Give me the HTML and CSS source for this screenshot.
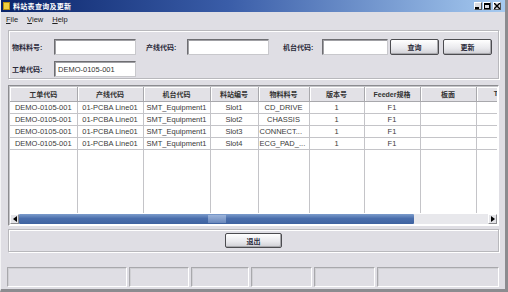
FILE: index.html
```html
<!DOCTYPE html>
<html lang="zh-CN">
<head>
    <meta charset="UTF-8">
    <title>料站表查询及更新</title>
    <link rel="stylesheet" href="styles.css">
</head>
<body>
    <div class="window">
        <div class="titlebar">
            <span class="app-icon"></span>
            <span class="title">料站表查询及更新</span>
            <div class="caption-btns">
                <span class="cbtn"><svg width="6" height="6" viewBox="0 0 6 6"><rect x="0" y="4" width="4" height="2" fill="#000"/></svg></span>
                <span class="cbtn"><svg width="6" height="6" viewBox="0 0 6 6"><rect x="0.5" y="0.5" width="5" height="5" fill="none" stroke="#000"/><rect x="0" y="0" width="6" height="2" fill="#000"/></svg></span>
                <span class="cbtn close"><svg width="6" height="6" viewBox="0 0 6 6"><path d="M0 0L6 6M6 0L0 6" stroke="#000" stroke-width="1.4"/></svg></span>
            </div>
        </div>
        <div class="menubar">
            <span><u>F</u>ile</span>
            <span><u>V</u>iew</span>
            <span><u>H</u>elp</span>
        </div>

        <div class="content">
            <div class="filters">
                <div class="filter-row">
                    <label class="lbl w42">物料料号:</label>
                    <input class="txt w82" type="text">
                    <label class="lbl w41 ml10">产线代码:</label>
                    <input class="txt w82" type="text">
                    <label class="lbl w39 ml14">机台代码:</label>
                    <input class="txt w66" type="text">
                    <button class="btn ml2">查询</button>
                    <button class="btn ml4">更新</button>
                </div>
                <div class="filter-row">
                    <label class="lbl w42">工单代码:</label>
                    <input class="txt w82" type="text" value="DEMO-0105-001">
                </div>
            </div>

            <div class="grid">
                <div class="grid-view">
                    <table>
                        <colgroup>
                            <col style="width:67px"><col style="width:66px"><col style="width:67px">
                            <col style="width:48px"><col style="width:51px"><col style="width:55px">
                            <col style="width:56px"><col style="width:56px"><col style="width:40px">
                        </colgroup>
                        <thead>
                            <tr>
                                <th>工单代码</th><th>产线代码</th><th>机台代码</th><th>料站编号</th>
                                <th>物料料号</th><th>版本号</th><th>Feeder规格</th><th>板面</th><th>T</th>
                            </tr>
                        </thead>
                        <tbody id="rows"></tbody>
                    </table>
                </div>
                <div class="hscroll">
                    <span class="arrow"><svg width="4" height="6" viewBox="0 0 4 6"><path d="M4 0V6L0 3Z" fill="#000"/></svg></span>
                    <span class="thumb"><span class="grip"></span></span>
                    <span class="track"></span>
                    <span class="arrow"><svg width="4" height="6" viewBox="0 0 4 6"><path d="M0 0V6L4 3Z" fill="#000"/></svg></span>
                </div>
            </div>

            <div class="actions">
                <button class="btn exit">退出</button>
            </div>

            <div class="statusbar">
                <span class="panel p120"></span>
                <span class="panel p60"></span>
                <span class="panel p58"></span>
                <span class="panel p61"></span>
                <span class="panel p61"></span>
                <span class="panel grow"></span>
            </div>
        </div>
    </div>

    <script>
        // 料站数据
        const stations = [
            ['DEMO-0105-001', '01-PCBA Line01', 'SMT_Equipment1', 'Slot1', 'CD_DRIVE', '1', 'F1'],
            ['DEMO-0105-001', '01-PCBA Line01', 'SMT_Equipment1', 'Slot2', 'CHASSIS', '1', 'F1'],
            ['DEMO-0105-001', '01-PCBA Line01', 'SMT_Equipment1', 'Slot3', 'CONNECT...', '1', 'F1'],
            ['DEMO-0105-001', '01-PCBA Line01', 'SMT_Equipment1', 'Slot4', 'ECG_PAD_...', '1', 'F1']
        ];

        const tbody = document.getElementById('rows');
        let html = '';
        stations.forEach(row => {
            html += '<tr>';
            row.forEach(v => {
                const cls = v.endsWith('...') ? ' class="cut"' : '';
                html += `<td${cls}>${v}</td>`;
            });
            html += '<td></td><td></td></tr>';
        });
        // 空白填充行
        html += '<tr class="filler">' + '<td></td>'.repeat(9) + '</tr>';
        tbody.innerHTML = html;
    </script>
</body>
</html>
```

FILE: styles.css
```css
* {
    box-sizing: border-box;
}

body {
    margin: 0;
    width: 508px;
    height: 292px;
    overflow: hidden;
    font-family: "Liberation Sans", "Noto Sans CJK SC", sans-serif;
    background-color: #dfdee4;
}

.window {
    width: 508px;
    height: 292px;
    display: flex;
    flex-direction: column;
    border-left: 1px solid #f4f4f6;
    border-right: 3px solid #8c8c90;
    border-bottom: 3px solid #8c8c90;
    background-color: #dfdee4;
}

.titlebar {
    height: 12px;
    display: flex;
    align-items: center;
    padding-left: 2px;
    background: linear-gradient(to right, #0a246a 0%, #3a5da8 45%, #a6caf0 100%);
}

.app-icon {
    width: 7px;
    height: 8px;
    background: #f0d040;
    border: 1px solid #b89010;
}

.title {
    margin-left: 3px;
    color: white;
    font-size: 7px;
    font-weight: bold;
    letter-spacing: 0.3px;
}

.caption-btns {
    margin-left: auto;
    margin-right: 4px;
    display: flex;
    gap: 1px;
}

.cbtn {
    width: 8px;
    height: 8px;
    display: flex;
    align-items: center;
    justify-content: center;
    background: #dcdce0;
    border: 1px solid #fff;
    border-right-color: #555;
    border-bottom-color: #555;
}

.cbtn.close {
    margin-left: 1px;
}

.menubar {
    height: 15px;
    display: flex;
    align-items: center;
    gap: 9px;
    padding-left: 5px;
    font-size: 7.5px;
    color: #222;
}

.content {
    flex: 1;
    display: flex;
    flex-direction: column;
    padding: 3px 6px 0 7px;
}

/* 查询条件 */
.filters {
    height: 49px;
    border: 1px solid #b8b8bc;
    box-shadow: inset 1px 1px 0 #fff, 1px 1px 0 #fff;
    padding: 8px 0 0 3px;
    display: flex;
    flex-direction: column;
    gap: 6px;
}

.filter-row {
    display: flex;
    align-items: center;
    height: 16px;
}

.lbl {
    font-size: 7px;
    color: #2a2a3a;
    font-weight: bold;
}

.w42 { width: 42px; }
.w41 { width: 41px; }
.w39 { width: 39px; }
.w82 { width: 82px; }
.w66 { width: 66px; }
.ml2 { margin-left: 2px; }
.ml4 { margin-left: 4px; }
.ml10 { margin-left: 10px; }
.ml14 { margin-left: 14px; }

.txt {
    height: 16px;
    padding: 0 0 0 3px;
    border: 1px solid #6e6e72;
    border-right-color: #c8c8cc;
    border-bottom-color: #c8c8cc;
    box-shadow: inset 1px 1px 0 #a0a0a4;
    background: white;
    font-family: "Liberation Sans", sans-serif;
    font-size: 7.5px;
    color: #333;
    outline: none;
}

.btn {
    width: 49px;
    height: 16px;
    padding: 0;
    border: 1px solid #4c4c50;
    border-radius: 2px;
    background: linear-gradient(#ffffff, #e8e8ec 60%, #cfcfd4);
    box-shadow: inset -1px -1px 0 #a8a8ac;
    font-family: "Liberation Sans", "Noto Sans CJK SC", sans-serif;
    font-size: 7px;
    font-weight: bold;
    color: #2a2a3a;
}

/* 表格 */
.grid {
    margin-top: 6px;
    height: 141px;
    border: 1px solid #8c8c90;
    border-right-color: #fff;
    border-bottom-color: #fff;
    box-shadow: inset 1px 1px 0 #c4c4c8;
    padding: 1px;
    display: flex;
    flex-direction: column;
    background: white;
}

.grid-view {
    flex: 1;
    overflow: hidden;
}

table {
    border-collapse: collapse;
    table-layout: fixed;
    width: 506px;
}

th {
    height: 14px;
    padding: 0;
    background: #e2e1e6;
    border-right: 1px solid #a8a8ac;
    border-bottom: 1px solid #a8a8ac;
    box-shadow: inset 1px 1px 0 #fff;
    font-size: 7px;
    font-weight: bold;
    color: #333;
    text-align: center;
    white-space: nowrap;
    overflow: hidden;
}

td {
    height: 12px;
    padding: 0 2px;
    border-right: 1px solid #c4c4c8;
    border-bottom: 1px solid #c4c4c8;
    font-size: 7.5px;
    color: #3a3a3a;
    text-align: center;
    white-space: nowrap;
    overflow: hidden;
}

td.cut {
    text-align: left;
    padding-left: 1px;
}

tr.filler td {
    height: 64px;
    border-bottom: none;
}

.hscroll {
    height: 10px;
    display: flex;
    background: #ebebef;
}

.arrow {
    width: 9px;
    display: flex;
    align-items: center;
    justify-content: center;
    background: #e4e4e8;
    border: 1px solid #fff;
    border-right-color: #8c8c90;
    border-bottom-color: #8c8c90;
}

.thumb {
    width: 395px;
    display: flex;
    justify-content: center;
    align-items: center;
    background: linear-gradient(#7c9ccc, #4a6eac 45%, #3e62a0);
    border-radius: 1px;
}

.grip {
    width: 18px;
    height: 8px;
    background: linear-gradient(#9cb4da, #6a88bc);
}

.track {
    flex: 1;
    background: #e8e8ec;
}

/* 操作按钮 */
.actions {
    margin-top: 3px;
    height: 23px;
    border: 1px solid #b8b8bc;
    box-shadow: inset 1px 1px 0 #fff, 1px 1px 0 #fff;
    display: flex;
    align-items: center;
    justify-content: center;
}

.btn.exit {
    width: 57px;
    height: 15px;
}

/* 状态栏 */
.statusbar {
    margin-top: 15px;
    margin-left: -1px;
    height: 20px;
    display: flex;
    gap: 2px;
}

.panel {
    height: 20px;
    border: 1px solid #a8a8ac;
    border-right-color: #fff;
    border-bottom-color: #fff;
    box-shadow: inset 1px 1px 0 #d0d0d4;
}

.p120 { width: 120px; }
.p60 { width: 60px; }
.p58 { width: 58px; }
.p61 { width: 61px; }
.grow { flex: 1; }
```
